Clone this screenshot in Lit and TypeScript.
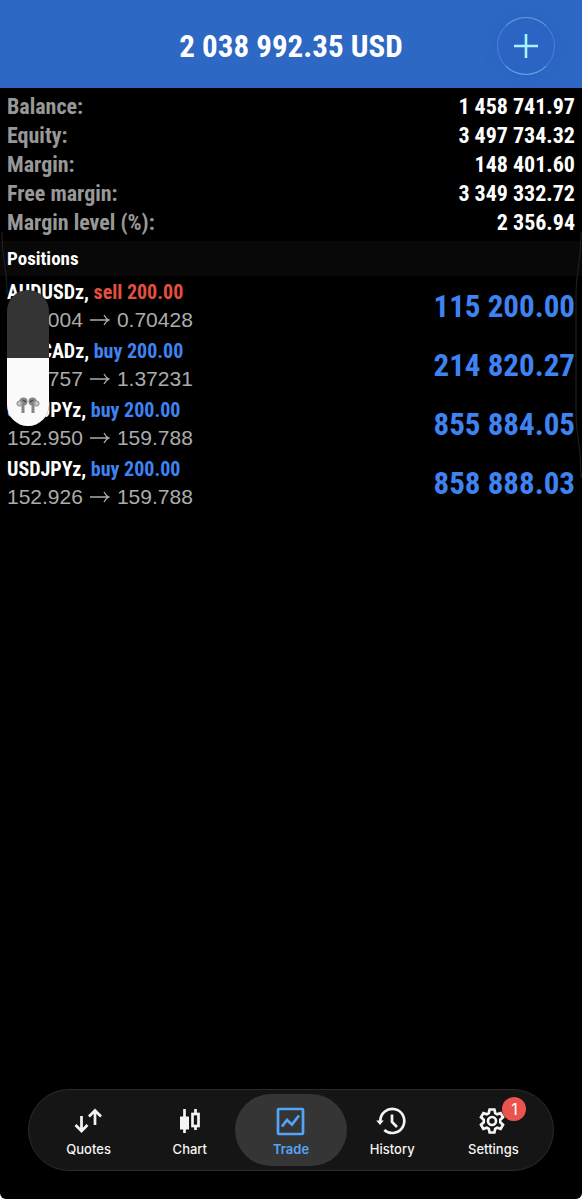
import { LitElement, html, css, svg } from "lit";
import { customElement, property } from "lit/decorators.js";
import { classMap } from "lit/directives/class-map.js";

interface Position {
  symbol: string;
  side: "buy" | "sell";
  volume: string;
  open: string;
  current: string;
  profit: string;
}

const SUMMARY: [string, string][] = [
  ["Balance:", "1 458 741.97"],
  ["Equity:", "3 497 734.32"],
  ["Margin:", "148 401.60"],
  ["Free margin:", "3 349 332.72"],
  ["Margin level (%):", "2 356.94"],
];

const POSITIONS: Position[] = [
  { symbol: "AUDUSDz", side: "sell", volume: "200.00", open: "0.71004", current: "0.70428", profit: "115 200.00" },
  { symbol: "USDCADz", side: "buy", volume: "200.00", open: "1.35757", current: "1.37231", profit: "214 820.27" },
  { symbol: "USDJPYz", side: "buy", volume: "200.00", open: "152.950", current: "159.788", profit: "855 884.05" },
  { symbol: "USDJPYz", side: "buy", volume: "200.00", open: "152.926", current: "159.788", profit: "858 888.03" },
];

const GEAR =
  "M11.6 2.5h4.8l.8 3.6 1.9 1.1 3.5-1.1 2.4 4.1-2.7 2.5v2.6l2.7 2.5-2.4 4.1-3.5-1.1-1.9 1.1-.8 3.6h-4.8l-.8-3.6-1.9-1.1-3.5 1.1L3 17.8l2.7-2.5v-2.6L3 10.2l2.4-4.1 3.5 1.1 1.9-1.1z";

const ICONS = {
  quotes: svg`<path d="M7.500 9v15M1.500 18l6 6 6-6M21 18V3.500M15 9.500l6-6 6 6" />`,
  chart: svg`
    <path d="M9.500 2v24M20.500 2v5M20.500 19v4" />
    <rect class="solid" x="5" y="9.500" width="9" height="13" />
    <rect x="17.500" y="7" width="6" height="12" />`,
  trade: svg`
    <rect x="2" y="2" width="25" height="25" rx="1" />
    <path d="m6 19.500 5-6.500 5 4.500 7-9" />`,
  history: svg`
    <path d="M3.300 14a12 12 0 1 1 4 8.900M15 7.500v7.500l5 5" />
    <path class="solid" d="M-.8 13.500h7.600L3 18z" />`,
  settings: svg`<path d=${GEAR} /><circle cx="14" cy="14" r="4" />`,
};

const TABS: { id: keyof typeof ICONS; label: string; badge?: string }[] = [
  { id: "quotes", label: "Quotes" },
  { id: "chart", label: "Chart" },
  { id: "trade", label: "Trade" },
  { id: "history", label: "History" },
  { id: "settings", label: "Settings", badge: "1" },
];

@customElement("trade-header")
export class TradeHeader extends LitElement {
  static styles = css`
    .bar {
      display: grid;
      grid-template-columns: 1fr auto 1fr;
      align-items: center;
      height: 88px;
      padding: 0 27px;
      box-sizing: border-box;
      background: #2d68c4;
      color: #fff;
    }
    .title {
      grid-column: 2;
      margin: 0;
      padding-top: 6px;
      font: bold 31px/40px "Roboto Condensed", "Liberation Sans", sans-serif;
    }
    .add {
      justify-self: end;
      display: grid;
      place-items: center;
      width: 58px;
      height: 58px;
      margin-top: 3px;
      padding: 0;
      border: 1px solid #4a93dc;
      border-color: #59a4e6 #4385d6 #59b0e6 #4385d6;
      border-radius: 50%;
      background: #2c64c4;
      box-shadow: 0 0 16px rgba(36, 84, 190, 0.25);
    }
    .plus {
      width: 24px;
      height: 24px;
      stroke: #a5f4ff;
      stroke-width: 2.6;
    }
  `;
  render() {
    return html`<header class="bar">
      <h1 class="title">2 038 992.35 USD</h1>
      <button class="add" aria-label="New order">
        <svg class="plus" viewBox="0 0 24 24"><path d="M12 0v24M0 12h24" /></svg>
      </button>
    </header>`;
  }
}

@customElement("position-row")
export class PositionRow extends LitElement {
  @property({ attribute: false }) position!: Position;
  static styles = css`
    .row {
      display: flex;
      justify-content: space-between;
      padding: 2px 7px 0;
      font: 21px/28px "Liberation Sans", Arial, sans-serif;
    }
    .name,
    .profit {
      font-family: "Roboto Condensed", "Liberation Sans", sans-serif;
      font-weight: bold;
    }
    .name {
      font-size: 20px;
      color: #fff;
    }
    .buy,
    .profit {
      color: #3f83f3;
    }
    .sell {
      color: #e4503f;
    }
    .prices {
      display: flex;
      gap: 7px;
      align-items: center;
      color: #acacac;
    }
    .arrow {
      width: 20px;
      height: 12px;
      fill: none;
      stroke: #acacac;
      stroke-width: 1.3;
    }
    .profit {
      font-size: 31px;
      line-height: 57px;
    }
  `;
  render() {
    const p = this.position;
    return html`<div class="row">
      <div>
        <div class="name">${p.symbol}, <span class=${p.side}>${p.side} ${p.volume}</span></div>
        <div class="prices">
          <span>${p.open}</span>
          <svg class="arrow" viewBox="0 0 20 12" role="img" aria-label="to">
            <path d="M0 6h19M14 1q2 4 5 5-3 1-5 5" />
          </svg>
          <span>${p.current}</span>
        </div>
      </div>
      <div class="profit">${p.profit}</div>
    </div>`;
  }
}

@customElement("tab-bar")
export class TabBar extends LitElement {
  static styles = css`
    .tabs {
      display: flex;
      margin: 0 28px 28px;
      padding: 4px 9px;
      border: 1px solid #2c2c2c;
      border-radius: 41px;
      background: #151515;
    }
    .tab {
      flex: 1;
      display: flex;
      flex-direction: column;
      align-items: center;
      gap: 5px;
      height: 72px;
      padding-top: 13px;
      box-sizing: border-box;
      border-radius: 36px;
      color: #f4f4f4;
      text-decoration: none;
      font: 500 13px/18px Inter, sans-serif;
    }
    .active {
      margin: 0 -5px;
      padding-left: 5px;
      padding-right: 5px;
      background: #353535;
      color: #54a5f5;
      font-weight: 600;
    }
    .glyph {
      position: relative;
      height: 28px;
    }
    .icon {
      display: block;
      width: 28px;
      height: 28px;
      overflow: visible;
      fill: none;
      stroke: currentColor;
      stroke-width: 2.7;
    }
    .solid {
      fill: currentColor;
      stroke: none;
    }
    .badge {
      position: absolute;
      left: 23px;
      top: -10px;
      width: 24px;
      border-radius: 12px;
      background: #ea534e;
      color: #fff;
      font: 16px/24px Inter, sans-serif;
      text-align: center;
    }
  `;
  render() {
    return html`<nav class="tabs">
      ${TABS.map(
        (t) => html`<a class=${classMap({ tab: true, active: t.id === "trade" })} href="#${t.id}">
          <span class="glyph">
            <svg class="icon" viewBox="1 0 28 28" aria-hidden="true">${ICONS[t.id]}</svg>
            ${t.badge ? html`<span class="badge">${t.badge}</span>` : ""}
          </span>
          <span>${t.label}</span>
        </a>`
      )}
    </nav>`;
  }
}

@customElement("app-root")
export class AppRoot extends LitElement {
  static styles = css`
    :host {
      display: block;
      background: #fff;
    }
    .screen {
      position: relative;
      display: flex;
      flex-direction: column;
      min-height: 100vh;
      overflow: hidden;
      border-radius: 0 0 6px 6px;
      background: #000;
    }
    .summary {
      margin: 0;
      padding: 4px 7px;
      font: bold 22px/29px "Roboto Condensed", "Liberation Sans", sans-serif;
    }
    .line {
      display: flex;
      justify-content: space-between;
    }
    .label {
      color: #989898;
    }
    .value {
      margin: 0;
      color: #fff;
    }
    .section {
      margin: 0;
      padding: 0 7px;
      background: #080808;
      color: #fff;
      font: bold 19px/35px "Roboto Condensed", "Liberation Sans", sans-serif;
    }
    .list {
      flex: 1;
    }
    .volume {
      position: absolute;
      left: 7px;
      top: 290px;
      display: flex;
      flex-direction: column;
      width: 42px;
      height: 136px;
      overflow: hidden;
      border-radius: 21px;
      background: #343434;
    }
    .level {
      display: flex;
      justify-content: center;
      align-items: center;
      height: 68px;
      margin-top: auto;
      padding-top: 26px;
      box-sizing: border-box;
      background: #fafafa;
    }
    .buds {
      width: 24px;
      height: 16px;
    }
    .edge {
      position: absolute;
      top: 232px;
      width: 8px;
      height: 250px;
      fill: none;
      stroke: #242424;
    }
    .left {
      left: 0;
    }
    .right {
      right: 0;
    }
  `;
  render() {
    return html`<div class="screen">
      <trade-header></trade-header>
      <dl class="summary">
        ${SUMMARY.map(
          ([k, v]) => html`<div class="line"><dt class="label">${k}</dt><dd class="value">${v}</dd></div>`
        )}
      </dl>
      <h2 class="section">Positions</h2>
      <div class="list">
        ${POSITIONS.map((p) => html`<position-row .position=${p}></position-row>`)}
      </div>
      <tab-bar></tab-bar>
      <svg class="edge left" viewBox="0 0 8 250"><path d="M2 0C2 26 7 36 7 62" /></svg>
      <svg class="edge right" viewBox="0 0 8 250"><path d="M7 0C7 30 2 40 2 64V178C2 205 7 212 7 246" /></svg>
      <div class="volume" role="img" aria-label="Volume">
        <div class="level">
          <svg class="buds" viewBox="0 0 24 16">
            <g fill="#868686">
              <circle cx="7.500" cy="4.500" r="4" />
              <circle cx="16.500" cy="4.500" r="4" />
              <path d="M5.500 7h3v9h-3zM15.500 7h3v9h-3z" />
            </g>
            <g fill="#c4c4c4" stroke="#8c8c8c">
              <circle cx="3.500" cy="6.500" r="2.600" />
              <circle cx="20.500" cy="6.500" r="2.600" />
            </g>
            <path d="m7 3 3 2M17 3l-3 2" stroke="#444" stroke-width="1.500" />
          </svg>
        </div>
      </div>
    </div>`;
  }
}
